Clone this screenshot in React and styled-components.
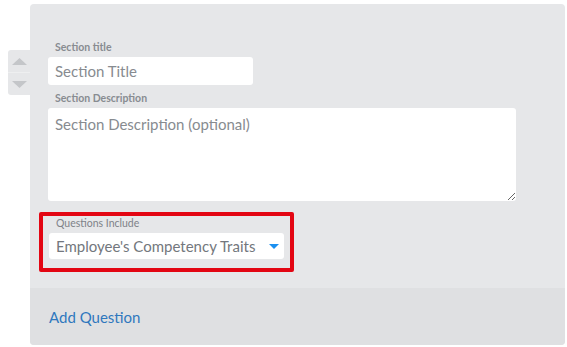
import styled, { createGlobalStyle } from "styled-components";

const GlobalStyle = createGlobalStyle`
  html, body {
    margin: 0;
    padding: 0;
    background: #ffffff;
  }
  body {
    font-family: Lato, "Open Sans", sans-serif;
  }
`;

const Page = styled.div`
  display: flex;
  align-items: flex-start;
  padding: 4px 0 0 8px;
  width: 567px;
  height: 347px;
  box-sizing: border-box;
`;

const Handle = styled.div`
  margin-top: 46px;
  width: 22px;
  height: 45px;
  background: #e6e7e9;
  border-radius: 3px 0 0 3px;
  display: flex;
  flex-direction: column;
  .half {
    flex: 1;
    display: flex;
    align-items: center;
    justify-content: center;
  }
  .half + .half {
    border-top: 1px solid #eeeff0;
  }
`;

const Panel = styled.div`
  width: 535px;
  height: 341px;
  background: #e6e7e9;
  border-radius: 4px;
  overflow: hidden;
  display: flex;
  flex-direction: column;
`;

const Body = styled.div`
  flex: 1;
  padding: 36px 0 0 18px;
  display: flex;
  flex-direction: column;
  align-items: flex-start;
`;

const Label = styled.div`
  font-size: 10.5px;
  line-height: 14px;
  font-weight: ${(p) => (p.light ? 400 : 700)};
  color: ${(p) => (p.light ? "#7e8288" : "#888c91")};
  padding-left: 7px;
  margin-bottom: 3px;
`;

const TextInput = styled.input`
  width: 205px;
  height: 28px;
  box-sizing: border-box;
  border: none;
  border-radius: 3px;
  background: #ffffff;
  padding: 0 7px;
  font-family: inherit;
  font-size: 15px;
  color: #555;
  outline: none;
  margin-bottom: 6px;
  &::placeholder {
    color: #878b90;
  }
`;

const TextArea = styled.textarea`
  width: 468px;
  height: 93px;
  box-sizing: border-box;
  border: none;
  border-radius: 3px;
  background: #ffffff;
  padding: 6px 7px;
  font-family: inherit;
  font-size: 15px;
  line-height: 20px;
  color: #555;
  outline: none;
  resize: vertical;
  margin: 0 0 11px;
  &::placeholder {
    color: #878b90;
  }
`;

const Highlight = styled.div`
  margin-left: -9px;
  width: 255px;
  height: 60px;
  box-sizing: border-box;
  border: 4px solid #e30613;
  border-radius: 2px;
  padding: 0 6px;
`;

const Select = styled.div`
  height: 26px;
  box-sizing: border-box;
  background: #ffffff;
  border-radius: 3px;
  display: flex;
  align-items: center;
  justify-content: space-between;
  padding: 0 5px 0 7px;
  font-size: 15px;
  color: #73777d;
  white-space: nowrap;
`;

const Footer = styled.div`
  height: 57px;
  background: #dfe0e2;
  display: flex;
  align-items: center;
  padding-left: 19px;
`;

const AddLink = styled.a`
  font-size: 15px;
  color: #2f78be;
  text-decoration: none;
  cursor: pointer;
`;

function Triangle({ up }) {
  return (
    <svg width="15" height="7" viewBox="0 0 15 7">
      <path d={up ? "M0 7 L7.5 0 L15 7 Z" : "M0 0 L7.5 7 L15 0 Z"} fill="#c4c6c9" />
    </svg>
  );
}

export default function App() {
  return (
    <>
      <GlobalStyle />
      <Page>
        <Handle>
          <div className="half">
            <Triangle up />
          </div>
          <div className="half">
            <Triangle />
          </div>
        </Handle>
        <Panel>
          <Body>
            <Label>Section title</Label>
            <TextInput placeholder="Section Title" />
            <Label>Section Description</Label>
            <TextArea placeholder="Section Description (optional)" />
            <Highlight>
              <Label light>Questions Include</Label>
              <Select>
                <span>Employee's Competency Traits</span>
                <svg width="10" height="5" viewBox="0 0 10 5">
                  <path d="M0 0 L10 0 L5 5 Z" fill="#1a8ff0" />
                </svg>
              </Select>
            </Highlight>
          </Body>
          <Footer>
            <AddLink>Add Question</AddLink>
          </Footer>
        </Panel>
      </Page>
    </>
  );
}
